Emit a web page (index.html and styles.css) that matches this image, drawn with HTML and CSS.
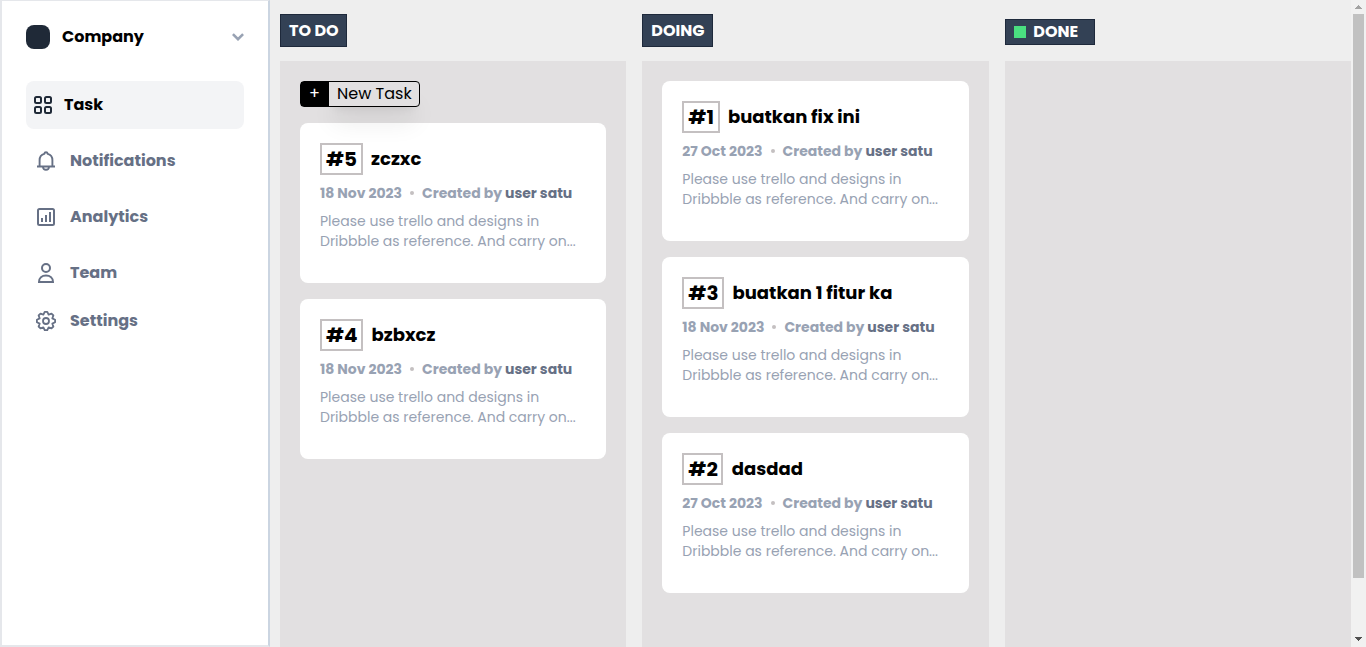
FILE: index.html
```html
<!DOCTYPE html>
<html lang="en">
<head>
<meta charset="utf-8">
<title>Task board</title>
<link rel="stylesheet" href="styles.css">
</head>
<body>
<div class="app">
  <aside class="sidebar">
    <div class="company">
      <span class="company-logo"></span>
      <span class="company-name">Company</span>
      <svg class="chevron" width="12" height="8" viewBox="0 0 12 8" fill="none" stroke="currentColor" stroke-width="2.6"><path d="M0.9 1.1 6 6.2l5.1-5.1"/></svg>
    </div>
    <nav class="nav">
      <a class="nav-item active">
        <svg class="grid-icon" width="18" height="18" viewBox="0 0 18 18" fill="none" stroke="currentColor" stroke-width="2"><rect x="1" y="1" width="6" height="6" rx="1.5"/><rect x="11" y="1" width="6" height="6" rx="1.5"/><rect x="1" y="11" width="6" height="6" rx="1.5"/><rect x="11" y="11" width="6" height="6" rx="1.5"/></svg>
        <span>Task</span>
      </a>
      <a class="nav-item">
        <svg class="icon" width="24" height="24" viewBox="0 0 24 24" fill="none" stroke="currentColor" stroke-width="1.9"><path d="M3 17.500h18M5.600 17v-6c0-3 1.800-5.400 4.700-6.200.2-1 .8-1.600 1.700-1.600s1.500.6 1.700 1.600c2.900.8 4.700 3.200 4.700 6.200v6M9 18c.1 1.700 1.300 2.800 3 2.800s2.900-1.100 3-2.800"/></svg>
        <span>Notifications</span>
      </a>
      <a class="nav-item">
        <svg class="icon" width="24" height="24" viewBox="0 0 24 24" fill="none" stroke="currentColor" stroke-width="2"><rect x="4" y="4" width="16" height="16" rx="1.500"/><path d="M8 13v4M12 10v7M16 7v10"/></svg>
        <span>Analytics</span>
      </a>
      <a class="nav-item">
        <svg class="icon" width="24" height="24" viewBox="0 0 24 24" fill="none" stroke="currentColor" stroke-width="2"><circle cx="12" cy="7" r="4"/><path d="M5 21c0-3.900 3-6.500 7-6.500s7 2.600 7 6.500z"/></svg>
        <span>Team</span>
      </a>
      <a class="nav-item last">
        <svg class="icon" width="24" height="24" viewBox="0 0 24 24" fill="none" stroke="currentColor" stroke-width="1.800" stroke-linejoin="round"><circle cx="12" cy="12" r="3"/><path d="M10.700 2.900h2.600L14.600 5.700 17.500 4.600 19.400 6.500 18.300 9.400 21.100 10.700v2.600L18.300 14.600 19.400 17.500 17.500 19.400 14.600 18.300 13.300 21.100h-2.600L9.400 18.300 6.500 19.400 4.600 17.500 5.700 14.600 2.900 13.300v-2.600L5.700 9.400 4.600 6.500 6.500 4.600 9.400 5.700z"/></svg>
        <span>Settings</span>
      </a>
    </nav>
  </aside>

  <main class="board">
    <section class="column">
      <header class="column-head"><h2 class="pill">TO DO</h2></header>
      <div class="column-body">
        <button class="new-task"><span class="plus">+</span><span class="new-label">New Task</span></button>
        <article class="card">
          <div class="card-top"><span class="tag">#5</span><h3 class="title">zczxc</h3></div>
          <div class="meta"><span>18 Nov 2023</span><i class="dot"></i><span>Created by <b>user satu</b></span></div>
          <p class="desc">Please use trello and designs in Dribbble as reference. And carry on...</p>
        </article>
        <article class="card">
          <div class="card-top"><span class="tag">#4</span><h3 class="title">bzbxcz</h3></div>
          <div class="meta"><span>18 Nov 2023</span><i class="dot"></i><span>Created by <b>user satu</b></span></div>
          <p class="desc">Please use trello and designs in Dribbble as reference. And carry on...</p>
        </article>
      </div>
    </section>

    <section class="column">
      <header class="column-head"><h2 class="pill">DOING</h2></header>
      <div class="column-body">
        <article class="card">
          <div class="card-top"><span class="tag">#1</span><h3 class="title">buatkan fix ini</h3></div>
          <div class="meta"><span>27 Oct 2023</span><i class="dot"></i><span>Created by <b>user satu</b></span></div>
          <p class="desc">Please use trello and designs in Dribbble as reference. And carry on...</p>
        </article>
        <article class="card">
          <div class="card-top"><span class="tag">#3</span><h3 class="title">buatkan 1 fitur ka</h3></div>
          <div class="meta"><span>18 Nov 2023</span><i class="dot"></i><span>Created by <b>user satu</b></span></div>
          <p class="desc">Please use trello and designs in Dribbble as reference. And carry on...</p>
        </article>
        <article class="card">
          <div class="card-top"><span class="tag">#2</span><h3 class="title">dasdad</h3></div>
          <div class="meta"><span>27 Oct 2023</span><i class="dot"></i><span>Created by <b>user satu</b></span></div>
          <p class="desc">Please use trello and designs in Dribbble as reference. And carry on...</p>
        </article>
      </div>
    </section>

    <section class="column">
      <header class="column-head"><h2 class="pill done"><span class="status"></span>DONE</h2></header>
      <div class="column-body"></div>
    </section>
  </main>

  <div class="scrollbar">
    <svg class="arrow-up" width="7" height="4" viewBox="0 0 7 4" shape-rendering="crispEdges"><path d="M3 0h1v1h1v1h1v1h1v1H0V3h1V2h1V1h1z"/></svg>
    <span class="thumb"></span>
    <svg class="arrow-down" width="7" height="4" viewBox="0 0 7 4" shape-rendering="crispEdges"><path d="M0 0h7v1H6v1H5v1H4v1H3V3H2V2H1V1H0z"/></svg>
  </div>
</div>
</body>
</html>
```
FILE: styles.css
```css
* { box-sizing: border-box; margin: 0; padding: 0; }
body { background: #eeeeee; font: 400 16px/24px Poppins, Inter, sans-serif; color: #000; overflow: hidden; }

.app { display: flex; width: 100%; height: 647px; }

.sidebar { flex: none; width: 270px; background: #fff; border: 2px solid #e5e7eb; border-top-width: 1px; border-right-color: #cbd5e1; padding: 24px; }
.company { display: flex; align-items: center; height: 24px; }
.company-logo { width: 24px; height: 24px; border-radius: 8px; background: #1f2937; }
.company-name { margin-left: 12px; font-weight: 700; }
.chevron { margin-left: auto; color: #98a2b3; }
.nav { display: flex; flex-direction: column; margin-top: 32px; }
.nav-item { display: flex; align-items: center; gap: 12px; height: 48px; padding-left: 8px; margin-bottom: 8px; border-radius: 8px; font-weight: 700; color: #667085; }
.nav-item.active { background: #f3f4f6; color: #000; }
.nav-item.last { margin-top: -8px; }
.grid-icon { color: #1f2937; }

.board { flex: 1; min-width: 0; display: grid; grid-template-columns: repeat(3, 1fr); gap: 16px; padding-left: 10px; }
.column { display: flex; flex-direction: column; min-width: 0; }
.column-head { height: 61px; flex: none; display: flex; align-items: center; }
.pill { display: flex; align-items: center; height: 33px; padding: 0 7.6px 0 8px; font-size: 16px; line-height: 31px; font-weight: 700; color: #fff; background: #334155; border: 1px solid #1e293b; }
.pill.done { height: 26px; width: 90px; line-height: 24px; margin-top: 3px; }
.status { width: 12px; height: 12px; margin-right: 7.6px; background: #4ade80; }
.column-body { flex: 1; background: #e2e0e1; padding: 20px; display: flex; flex-direction: column; gap: 16px; align-items: stretch; }

.new-task { position: relative; z-index: 1; align-self: flex-start; display: flex; height: 26px; border: 1px solid #000; border-radius: 4px; background: none; font: inherit; color: #000; }
.plus { width: 28px; padding-right: 1px; background: #000; color: #fff; text-align: center; }
.new-label { padding: 0 7px 0 8px; box-shadow: 0 20px 25px -5px rgba(0,0,0,.1), 0 8px 10px -6px rgba(0,0,0,.1); }

.card { height: 160px; flex: none; background: #fff; border-radius: 8px; padding: 20px; }
.card-top { display: flex; align-items: center; gap: 8.4px; height: 32px; }
.tag { height: 32px; padding: 0 3.6px 0 4px; border: 2px solid #c4c0c1; font-size: 20px; line-height: 28px; font-weight: 700; }
.title { font-size: 18px; line-height: 28px; font-weight: 700; }
.meta { display: flex; align-items: center; gap: 8px; margin-top: 8px; font-size: 14px; line-height: 20px; font-weight: 700; color: #98a2b3; }
.meta b { font-weight: 700; color: #667085; }
.dot { width: 4px; height: 4px; border-radius: 50%; background: #c4c0c1; }
.desc { margin-top: 8px; font-size: 14px; line-height: 20px; color: #98a2b3; }

.scrollbar { flex: none; width: 15px; background: #f1f1f1; display: flex; flex-direction: column; align-items: center; padding: 5px 0 6px; }
.thumb { width: 11px; height: 564px; margin-top: 5px; background: #c1c1c1; }
.arrow-up { fill: #a3a3a3; }
.arrow-down { fill: #505050; margin-top: auto; }
```
